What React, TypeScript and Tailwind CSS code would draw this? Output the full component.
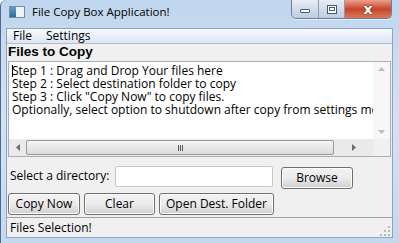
import React from "react";

const font = { fontFamily: '"Open Sans", "Noto Sans", sans-serif' };

function CaptionButtons() {
  return (
    <div className="flex h-[19px] rounded-b-[5px] border border-t-0 border-[#6b7f9a] overflow-hidden shadow-[0_1px_0_rgba(255,255,255,0.6)]">
      <div className="w-[27px] flex items-center justify-center bg-gradient-to-b from-[#e8eef7] to-[#bccbe0] border-r border-[#8a9bb3]">
        <div className="w-[10px] h-[4px] mt-[4px] border border-[#475a77] bg-white rounded-[1px]" />
      </div>
      <div className="w-[26px] flex items-center justify-center bg-gradient-to-b from-[#e8eef7] to-[#bccbe0] border-r border-[#8a9bb3]">
        <div className="w-[10px] h-[9px] border border-[#475a77] bg-white flex items-center justify-center">
          <div className="w-[6px] h-[4px] border border-[#475a77]" />
        </div>
      </div>
      <div className="w-[46px] flex items-center justify-center bg-gradient-to-b from-[#e9a18d] via-[#c8432a] to-[#d5795c]">
        <span className="text-white text-[14px] font-bold leading-none [text-shadow:0_0_2px_#6a1a0a]" style={{ fontFamily: '"DejaVu Sans", sans-serif' }}>
          x
        </span>
      </div>
    </div>
  );
}

function Btn({ label, w }: { label: string; w: string }) {
  return (
    <button
      className={`${w} h-[22px] rounded-[3px] border border-[#707070] bg-gradient-to-b from-[#f2f2f2] via-[#ebebeb] to-[#cfcfcf] text-[12px] text-black leading-none shadow-[inset_0_0_0_1px_#fcfcfc]`}
      style={font}
    >
      {label}
    </button>
  );
}

export default function App() {
  const lines = [
    "Step 1 : Drag and Drop Your files here",
    "Step 2 : Select destination folder to copy",
    'Step 3 : Click "Copy Now" to copy files.',
    "Optionally, select option to shutdown after copy from settings menu",
  ];

  return (
    <div className="w-[399px] h-[243px] overflow-hidden bg-white">
      <div className="w-[399px] h-[243px] flex flex-col bg-gradient-to-b from-[#c0d6ee] via-[#d3e3f4] to-[#c4d8ee] border-l border-[#4f6a8c] rounded-tl-[6px]">
        {/* Title bar */}
        <div className="h-[28px] flex items-start justify-between pl-[8px] pr-[7px]">
          <div className="flex items-center gap-[7px] h-[24px]">
            <div className="w-[16px] h-[12px] border border-[#7a8ba0] bg-[#dfe6ee] flex">
              <div className="w-[6px] h-full bg-gradient-to-b from-[#5aa0c8] to-[#2d6f94]" />
              <div className="flex-1 bg-[#eef3f8]" />
            </div>
            <span className="text-[11.5px] text-black" style={font}>
              File Copy Box Application!
            </span>
          </div>
          <CaptionButtons />
        </div>

        {/* Client area */}
        <div className="flex-1 flex flex-col ml-[5px] mr-[6px] mb-[5px] border border-[#8da3bf] bg-[#f0f0f0]">
          {/* Menu */}
          <div className="h-[15px] flex items-center gap-[14px] pl-[6px] bg-gradient-to-b from-[#f8fbfe] to-[#dbe5f2] border-b border-[#b4bdcc] text-[12px] text-black" style={font}>
            <span>File</span>
            <span>Settings</span>
          </div>

          <div className="pl-[1px] h-[17px] flex items-center text-[13.5px] font-bold text-black" style={{ fontFamily: '"Liberation Sans", Arial, sans-serif' }}>
            Files to Copy
          </div>

          {/* Text box */}
          <div className="mx-[1px] h-[96px] border border-[#abadb3] bg-white flex flex-col">
            <div className="flex-1 flex min-h-0">
              <div className="flex-1 min-w-0 overflow-hidden pl-[3px] pt-[2px] text-[12px] leading-[13px] text-black whitespace-nowrap" style={font}>
                {lines.map((l, i) => (
                  <div key={i}>
                    {i === 0 && <span className="inline-block w-px h-[12px] bg-black align-[-2px] -mr-px" />}
                    {l}
                  </div>
                ))}
              </div>
              <div className="w-[17px] shrink-0 flex flex-col items-center justify-between bg-[#f7f7f7] py-[5px]">
                <svg width="7" height="4" viewBox="0 0 7 4"><path d="M0 4 L3.5 0 L7 4Z" fill="#b8bcc2" /></svg>
                <svg width="7" height="4" viewBox="0 0 7 4"><path d="M0 0 L3.5 4 L7 0Z" fill="#b8bcc2" /></svg>
              </div>
            </div>
            <div className="h-[17px] flex items-center bg-[#eaeaea]">
              <div className="w-[17px] flex justify-center">
                <svg width="4" height="7" viewBox="0 0 4 7"><path d="M4 0 L0 3.5 L4 7Z" fill="#6d6d6d" /></svg>
              </div>
              <div className="w-[308px] h-[15px] rounded-[2px] border border-[#9a9a9a] bg-gradient-to-b from-[#f4f4f4] to-[#dcdcdc] flex items-center justify-center gap-[1px]">
                <div className="w-px h-[6px] bg-[#555]" />
                <div className="w-px h-[6px] bg-[#555]" />
                <div className="w-px h-[6px] bg-[#555]" />
              </div>
              <div className="flex-1 flex justify-center">
                <svg width="4" height="7" viewBox="0 0 4 7"><path d="M0 0 L4 3.5 L0 7Z" fill="#6d6d6d" /></svg>
              </div>
              <div className="w-[17px] h-full bg-[#f0f0f0]" />
            </div>
          </div>

          {/* Directory row */}
          <div className="flex items-center mt-[8px] h-[22px] pl-[3px]">
            <span className="w-[105px] text-[12px] text-black" style={font}>
              Select a directory:
            </span>
            <div className="w-[158px] h-[21px] rounded-[2px] border border-[#c5c9cf] bg-white" />
            <div className="ml-[8px]">
              <Btn label="Browse" w="w-[72px]" />
            </div>
          </div>

          {/* Buttons */}
          <div className="flex items-center gap-[4px] mt-[6px] pl-[1px]">
            <Btn label="Copy Now" w="w-[72px]" />
            <Btn label="Clear" w="w-[71px]" />
            <Btn label="Open Dest. Folder" w="w-[115px]" />
          </div>

          {/* Status bar */}
          <div className="mt-auto h-[20px] border-t border-[#a0a0a0] flex items-center justify-between pl-[3px] pr-[2px] text-[12px] text-black" style={font}>
            <span>Files Selection!</span>
            <svg width="10" height="10" viewBox="0 0 10 10" className="self-end mb-[1px]">
              {[[8, 0], [8, 4], [4, 4], [8, 8], [4, 8], [0, 8]].map(([x, y], i) => (
                <rect key={i} x={x} y={y} width="2" height="2" fill="#b9b9b9" />
              ))}
            </svg>
          </div>
        </div>
      </div>
    </div>
  );
}
